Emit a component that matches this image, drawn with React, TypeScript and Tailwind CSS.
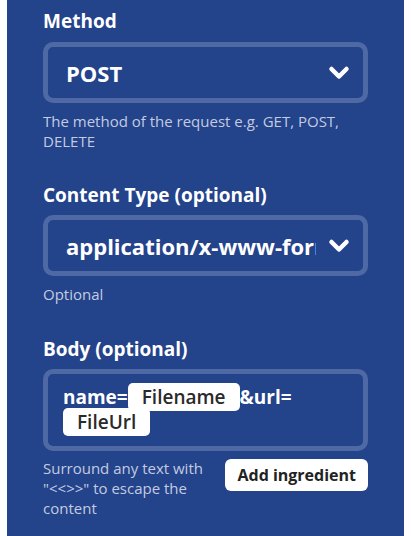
import React from "react";

const Chevron = () => (
  <svg width="22" height="16" viewBox="0 0 22 16" className="shrink-0">
    <polyline
      points="3.5,4 11,11.5 18.5,4"
      fill="none"
      stroke="white"
      strokeWidth="4.5"
      strokeLinecap="round"
      strokeLinejoin="round"
    />
  </svg>
);

const Select: React.FC<{ value: string }> = ({ value }) => (
  <div className="flex h-[61px] items-center gap-3 rounded-[10px] border-[5px] border-[#4f69a4] bg-[#23438b] pl-[18px] pr-[13px]">
    <span className="min-w-0 flex-1 overflow-hidden whitespace-nowrap text-[22px] font-bold leading-[28px] text-white">
      {value}
    </span>
    <Chevron />
  </div>
);

const Pill: React.FC<{ children: React.ReactNode }> = ({ children }) => (
  <span className="rounded-[5px] bg-white px-[14px] py-[1px] font-semibold text-[#2a2a2a]">
    {children}
  </span>
);

export default function App() {
  return (
    <div className="min-h-[536px] bg-white px-[7px] font-['Open_Sans',sans-serif]">
      <div className="min-h-[536px] bg-[#23438b] px-9 pt-[7px]">
        <div>
          <h3 className="text-[19px] font-bold leading-[28px] text-white">Method</h3>
          <div className="mt-[7px]">
            <Select value="POST" />
          </div>
          <p className="mt-[8px] text-[15px] leading-[20px] text-[#c3cbe0]">
            The method of the request e.g. GET, POST, DELETE
          </p>
        </div>

        <div className="mt-[30px]">
          <h3 className="text-[19px] font-bold leading-[28px] text-white">
            Content Type (optional)
          </h3>
          <div className="mt-[6px]">
            <Select value="application/x-www-form-urlencoded" />
          </div>
          <p className="mt-[8px] text-[15px] leading-[20px] text-[#c3cbe0]">
            Optional
          </p>
        </div>

        <div className="mt-[31px]">
          <h3 className="text-[19px] font-bold leading-[28px] text-white">Body (optional)</h3>
          <div className="mt-[6px] rounded-[10px] border-[5px] border-[#4f69a4] py-[11px] pl-[15px] pr-[12px] text-[19px] font-bold leading-[25px] text-white">
            name=<Pill>Filename</Pill>&amp;url=<wbr />
            <Pill>FileUrl</Pill>
          </div>
          <div className="mt-[7px] flex items-start justify-between">
            <p className="w-[166px] text-[15px] leading-[20px] text-[#c3cbe0]">
              Surround any text with "&lt;&lt;&gt;&gt;" to escape the content
            </p>
            <button className="mt-[1px] rounded-[6px] bg-white px-3 py-[4px] text-[16px] font-bold text-[#222]">
              Add ingredient
            </button>
          </div>
        </div>
      </div>
    </div>
  );
}
